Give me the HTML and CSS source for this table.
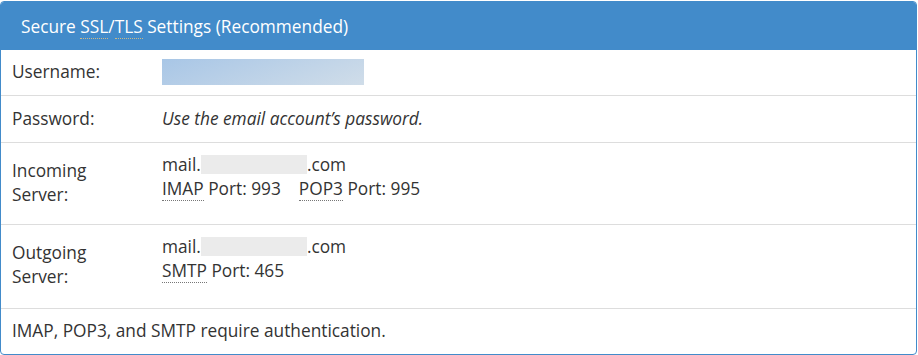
FILE: index.html
```html
<!DOCTYPE html>
<html lang="en">
<head>
  <meta charset="UTF-8">
  <title>Mail Client Settings</title>
  <link rel="stylesheet" href="styles.css">
</head>
<body>

<div class="panel">
  <div class="panel-heading">
    Secure <abbr title="Secure Sockets Layer">SSL</abbr>/<abbr title="Transport Layer Security">TLS</abbr> Settings (Recommended)
  </div>

  <table class="settings">
    <tr>
      <td class="label">Username:</td>
      <td><span class="blur-user"></span></td>
    </tr>
    <tr>
      <td class="label">Password:</td>
      <td><em>Use the email account’s password.</em></td>
    </tr>
    <tr class="tall">
      <td class="label">Incoming Server:</td>
      <td>
        mail.<span class="blur-host"></span>.com<br>
        <abbr title="Internet Message Access Protocol">IMAP</abbr> Port: 993 &nbsp;&nbsp;
        <abbr title="Post Office Protocol 3">POP3</abbr> Port: 995
      </td>
    </tr>
    <tr class="tall">
      <td class="label">Outgoing Server:</td>
      <td>
        mail.<span class="blur-host"></span>.com<br>
        <abbr title="Simple Mail Transfer Protocol">SMTP</abbr> Port: 465
      </td>
    </tr>
    <tr class="foot">
      <td colspan="2">IMAP, POP3, and SMTP require authentication.</td>
    </tr>
  </table>
</div>

</body>
</html>
```

FILE: styles.css
```css
* {
  margin: 0;
  padding: 0;
  box-sizing: border-box;
}

body {
  background: #fff;
  font-family: 'Open Sans', sans-serif;
  font-size: 17.3px;
  color: #333;
  padding-top: 1px;
}

.panel {
  width: 917px;
  border: 1px solid #428bca;
  border-radius: 4px;
  overflow: hidden;
}

.panel-heading {
  background-color: #428bca;
  color: #fff;
  height: 48px;
  padding: 13px 20px 0;
}

abbr {
  text-decoration: none;
  border-bottom: 1px dotted #777;
}

.panel-heading abbr {
  border-bottom-color: #c9b98a;
}

.settings {
  width: 100%;
  border-collapse: collapse;
}

.settings td {
  height: 47px;
  padding: 0 11px;
  vertical-align: middle;
  border-top: 1px solid #ddd;
  line-height: 24px;
}

.settings tr:first-child td {
  border-top: none;
  height: 45px;
}

.settings td.label {
  width: 150px;
  padding-right: 40px;
}

.settings tr.tall td {
  height: 82px;
  vertical-align: top;
  padding-top: 10px;
}

.settings tr.tall + tr.tall td {
  height: 84px;
}

.settings tr.tall td.label {
  padding-top: 16px;
}

.settings tr.foot td {
  height: 46px;
}

em {
  font-style: italic;
}

.blur-user {
  display: inline-block;
  width: 202px;
  height: 26px;
  vertical-align: middle;
  background: linear-gradient(160deg, #a8c6e6, #d0dde9);
}

.blur-host {
  display: inline-block;
  width: 106px;
  height: 19px;
  vertical-align: -3px;
  background: #ebebeb;
}
```
